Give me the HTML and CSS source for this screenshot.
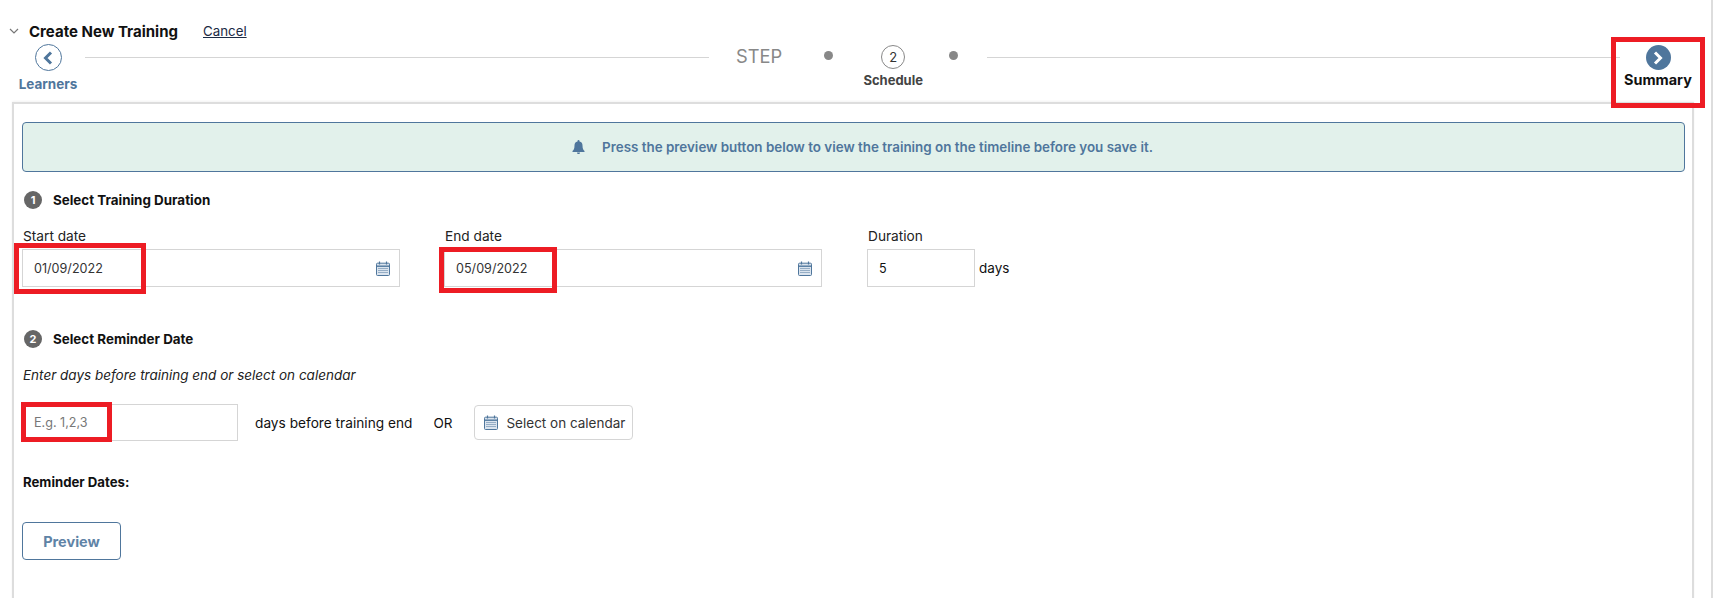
FILE: index.html
```html
<!DOCTYPE html>
<html lang="en">
<head>
<meta charset="utf-8">
<title>Create New Training</title>
<link rel="stylesheet" href="styles.css">
</head>
<body>
<svg class="defs" width="0" height="0" aria-hidden="true">
  <symbol id="cal" viewBox="0 0 14 15">
    <path d="M1.5 2.2h11a1 1 0 0 1 1 1v10.3a1 1 0 0 1-1 1h-11a1 1 0 0 1-1-1V3.200a1 1 0 0 1 1-1z" fill="#dbe4ee" stroke="#4f769c"/>
    <path d="M.5 5.200h13" stroke="#4f769c" stroke-width="1.400"/>
    <path d="M3.500.5v3M10.500.5v3" stroke="#4f769c" stroke-width="1.200"/>
    <path d="M2.500 7.500h9M2.500 9.500h9M2.500 11.500h9" stroke="#4f769c" stroke-width="1" stroke-dasharray="1 1"/>
  </symbol>
</svg>
<header class="title-row">
  <svg class="caret" width="10" height="6" viewBox="0 0 10 6"><path d="M1 1l4 4 4-4" fill="none" stroke="#777" stroke-width="1.200"/></svg>
  <h1 class="title">Create New Training</h1>
  <a class="cancel" href="#">Cancel</a>
</header>
<nav class="stepper">
  <div class="step step-back">
    <span class="round round-back"><svg width="12" height="14" viewBox="0 0 12 14"><path d="M9 1.500L3.500 7 9 12.500" fill="none" stroke="#4f769c" stroke-width="3"/></svg></span>
    <span class="step-label label-back">Learners</span>
  </div>
  <span class="line line-left"></span>
  <span class="step-word">STEP</span>
  <span class="dot dot-first"></span>
  <div class="step step-now">
    <span class="round round-now">2</span>
    <span class="step-label label-now">Schedule</span>
  </div>
  <span class="dot dot-second"></span>
  <span class="line line-right"></span>
  <div class="step step-next">
    <span class="round round-next"><svg width="12" height="14" viewBox="0 0 12 14"><path d="M3 1.500L8.500 7 3 12.500" fill="none" stroke="#fff" stroke-width="3"/></svg></span>
    <span class="step-label label-next">Summary</span>
    <span class="mark mark-next"></span>
  </div>
</nav>
<main class="card">
  <div class="banner">
    <svg width="13" height="14" viewBox="0 0 13 14"><path d="M6.500 0a1 1 0 0 1 1 1v.6A4 4 0 0 1 10.500 5.500c0 3.500 1 4.500 2 5.500v1H.5v-1c1-1 2-2 2-5.500A4 4 0 0 1 5.500 1.600V1a1 1 0 0 1 1-1zM5 12.600h3a1.500 1.500 0 0 1-3 0z" fill="#4f769c"/></svg>
    <span>Press the preview button below to view the training on the timeline before you save it.</span>
  </div>
  <h2 class="section"><span class="num">1</span>Select Training Duration</h2>
  <div class="dates">
    <div class="field field-date">
      <label class="label">Start date</label>
      <div class="input date-input"><span>01/09/2022</span><svg class="cal" width="14" height="15"><use href="#cal"/></svg><span class="mark mark-start"></span></div>
    </div>
    <div class="field field-date">
      <label class="label">End date</label>
      <div class="input date-input"><span>05/09/2022</span><svg class="cal" width="14" height="15"><use href="#cal"/></svg><span class="mark mark-end"></span></div>
    </div>
    <div class="field field-duration">
      <label class="label">Duration</label>
      <div class="duration-row"><div class="input duration-input">5</div><span class="days">days</span></div>
    </div>
  </div>
  <h2 class="section section-two"><span class="num">2</span>Select Reminder Date</h2>
  <p class="hint">Enter days before training end or select on calendar</p>
  <div class="reminder-row">
    <div class="input reminder-input"><span class="placeholder">E.g. 1,2,3</span><span class="mark mark-reminder"></span></div>
    <span class="before">days before training end</span>
    <span class="or">OR</span>
    <button class="cal-btn" type="button"><svg width="14" height="15"><use href="#cal"/></svg>Select on calendar</button>
  </div>
  <p class="dates-title">Reminder Dates:</p>
  <button class="preview" type="button">Preview</button>
</main>
</body>
</html>
```
FILE: styles.css
```css
* { box-sizing: border-box; }
html, body { margin: 0; height: 100%; }
body {
  height: 598px;
  overflow: hidden;
  background: #fff;
  color: #111;
  font-family: Inter, "Open Sans", sans-serif;
  font-size: 13.500px;
  border-right: 2px solid #ddd;
}
.defs { position: absolute; }
.title-row { display: flex; align-items: center; height: 20px; margin-top: 21px; padding-left: 9px; }
.caret { margin-right: 10px; }
.title { margin: 0; font-size: 15px; font-weight: 700; color: #111; }
.cancel { margin-left: 25px; font-size: 13.300px; color: #1c2a44; text-decoration: underline; }
.stepper { display: flex; align-items: flex-start; height: 61px; position: relative; }
.step { display: flex; flex-direction: column; align-items: center; flex: none; }
.step-back { width: 60px; margin-left: 18px; padding-top: 3px; }
.round { display: flex; align-items: center; justify-content: center; border-radius: 50%; flex: none; }
.round-back { width: 27px; height: 27px; border: 1px solid #4f769c; background: #fff; }
.step-label { font-size: 13px; font-weight: 700; white-space: nowrap; }
.label-back { color: #4f769c; margin-top: 5px; font-size: 13.500px; }
.line { height: 1px; background: #d5d5d5; margin-top: 16px; }
.line-left { margin-left: 7px; width: 624px; flex: none; }
.step-word { margin-left: 27px; font-size: 18.300px; color: #888; line-height: 24px; margin-top: 3px; }
.dot { width: 9px; height: 9px; border-radius: 50%; background: #888; margin-top: 10px; flex: none; }
.dot-first { margin-left: 42px; }
.step-now { width: 60px; margin-left: 30px; padding-top: 4px; }
.round-now { width: 24px; height: 24px; border: 1px solid #888; font-size: 13px; color: #333; }
.label-now { color: #444; margin-top: 3px; }
.dot-second { margin-left: 26px; }
.line-right { margin-left: 29px; flex: 1; }
.step-next { width: 94px; margin-left: -9px; margin-right: 6px; padding-top: 3px; height: 67px; position: relative; }
.round-next { width: 25px; height: 25px; background: #4f769c; margin-top: 1px; }
.label-next { color: #111; font-size: 14.400px; margin-top: 1px; }
.mark { position: absolute; border: 5px solid #ed1c24; pointer-events: none; }
.mark-next { left: 0; right: 0; top: -4px; bottom: 0; }
.card {
  margin-left: 12px;
  width: 1682px;
  height: 500px;
  border: 2px solid #ddd;
  border-bottom: 0;
  padding: 18px 7px 0 8px;
  box-shadow: 0 -1px 2px rgba(0,0,0,.05);
}
.banner {
  display: flex; align-items: center; justify-content: center; gap: 17px;
  height: 50px;
  padding-left: 18px;
  background: #e2f1eb;
  border: 1px solid #4f769c;
  border-radius: 4px;
  color: #4f769c;
  font-size: 13.400px;
  font-weight: 600;
}
.section { display: flex; align-items: center; margin: 18px 0 0 2px; font-size: 13.400px; font-weight: 700; height: 20px; color: #111; }
.num { width: 18px; height: 18px; border-radius: 50%; background: #666; color: #fff; font-size: 11px; display: flex; align-items: center; justify-content: center; margin-right: 11px; }
.dates { display: flex; margin-top: 19px; }
.field { display: flex; flex-direction: column; }
.field-date { width: 422px; }
.field-duration { margin-left: 1px; }
.label { font-size: 13.700px; height: 14px; line-height: 14px; color: #222; margin-left: 1px; }
.input { height: 38px; border: 1px solid #d5d5d5; display: flex; align-items: center; padding-left: 11px; font-size: 12.600px; color: #333; position: relative; margin-top: 6px; }
.date-input { width: 378px; justify-content: space-between; padding-right: 9px; }
.mark-start { left: -9px; top: -7px; bottom: -8px; width: 132px; }
.mark-end { left: -6px; top: -3px; bottom: -7px; width: 118px; }
.cal { flex: none; }
.duration-row { display: flex; align-items: center; }
.duration-input { width: 108px; color: #111; }
.days { margin-left: 4px; margin-top: 6px; }
.section-two { margin-top: 42px; }
.hint { margin: 18px 0 0 1px; font-style: italic; font-size: 13.500px; color: #222; height: 16px; line-height: 16px; }
.reminder-row { display: flex; align-items: center; margin-top: 21px; }
.reminder-input { width: 216px; height: 37px; margin-top: 0; }
.placeholder { color: #777; }
.mark-reminder { left: -2px; top: -3px; bottom: -2px; width: 91px; }
.before { margin-left: 17px; font-size: 13.700px; }
.or { margin-left: 21px; }
.cal-btn { display: flex; align-items: center; gap: 8px; margin-left: 22px; height: 35px; width: 159px; padding: 0 0 0 9px; border: 1px solid #d5d5d5; border-radius: 4px; background: #fff; font: inherit; color: #333; white-space: nowrap; }
.dates-title { margin: 33px 0 0 1px; font-size: 13.200px; font-weight: 700; height: 16px; line-height: 16px; }
.preview { display: block; margin-top: 32px; width: 99px; height: 38px; border: 1px solid #4f769c; border-radius: 4px; background: #fff; color: #5f83a6; font: 700 14.500px Inter, sans-serif; }
```
